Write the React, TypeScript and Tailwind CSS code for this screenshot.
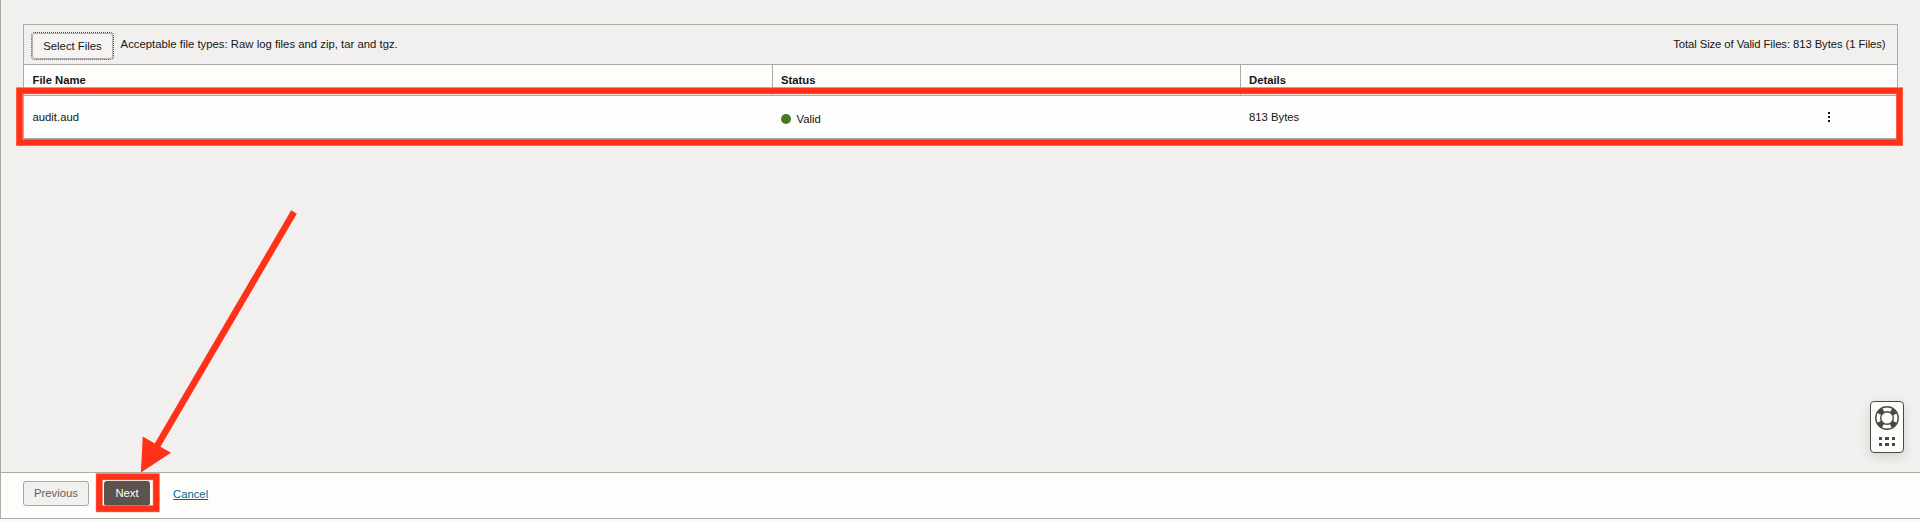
import React from "react";

function LifeRing() {
  return (
    <svg width="24" height="24" viewBox="0 0 24 24" fill="none" stroke="#4b4844">
      <circle cx="12" cy="12" r="8.8" stroke="#fdfdfc" strokeWidth="5" />
      <circle cx="12" cy="12" r="8.8" strokeWidth="5" strokeDasharray="5.6 8.22" strokeDashoffset="-4.11" />
      <circle cx="12" cy="12" r="11.2" strokeWidth="1.4" />
      <circle cx="12" cy="12" r="6.3" strokeWidth="1.4" />
    </svg>
  );
}

function HelpWidget() {
  return (
    <div className="absolute left-[1870px] top-[401px] flex h-[52px] w-[34px] flex-col items-center rounded-[4px] border border-[#4b4844] bg-[#fdfdfc] pt-[4px] shadow-[0_4px_12px_rgba(0,0,0,0.12)]">
      <LifeRing />
      <div className="mt-[7px] grid grid-cols-[3px_4px_3px] gap-x-[3px] gap-y-[3px]">
        {[0, 1, 2, 3, 4, 5].map((i) => (
          <span key={i} className="h-[3px] bg-[#4b4844]" />
        ))}
      </div>
    </div>
  );
}

function Annotations() {
  return (
    <svg className="pointer-events-none absolute left-0 top-0" width="1920" height="522" viewBox="0 0 1920 522" fill="none">
      <g stroke="#ff8a73" strokeWidth="7">
        <rect x="19.5" y="90.75" width="1880" height="51.75" />
        <rect x="99.25" y="476.75" width="57" height="32" />
      </g>
      <g stroke="#ff3119" strokeWidth="6">
        <rect x="19.5" y="90.75" width="1880" height="51.75" />
        <rect x="99.25" y="476.75" width="57" height="32" />
      </g>
      <path d="M294 212L156.2 447.5" stroke="#ff3119" strokeWidth="6.5" />
      <path d="M140.9 472.5L142.7 436.4L171 452.7Z" fill="#ff3119" />
    </svg>
  );
}

export default function App() {
  return (
    <div className="relative flex h-[522px] w-[1920px] flex-col overflow-hidden bg-[#fbfaf9] font-['Liberation_Sans',Arial,sans-serif] text-[11.3px] leading-[14px] text-[#161513]">
      <main className="h-[472px] border-l border-[#aaa6a1] bg-[#f1f0ee] pl-[22px] pt-[24px]">
        <section className="w-[1875px] border border-[#aeaaa5] bg-[#fdfdfc]">
          <div className="flex h-[39px] items-start justify-between bg-[#f1f0ee] pl-[7px] pr-[11.5px] pt-[7px]">
            <div className="flex">
              <button className="h-[28px] w-[83px] rounded-[4px] border border-dotted border-[#4a4845] bg-[#f5f4f2]">
                <span className="flex h-[26px] w-[81px] items-center justify-center rounded-[3px] border border-[#b5b1ac]">Select Files</span>
              </button>
              <span className="ml-[6.6px] mt-[5px] tracking-[0.015px]">Acceptable file types: Raw log files and zip, tar and tgz.</span>
            </div>
            <span className="mt-[5px] tracking-[-0.09px]">Total Size of Valid Files: 813 Bytes (1 Files)</span>
          </div>
          <div className="grid h-[32px] grid-cols-[748px_468px_657px] border-y border-[#aeaaa5] font-bold">
            <div className="pl-[8.5px] pt-[8px]">File Name</div>
            <div className="border-l border-[#aeaaa5] pl-[8px] pt-[8px]">Status</div>
            <div className="border-l border-[#aeaaa5] pl-[8px] pt-[8px]">Details</div>
          </div>
          <div className="grid h-[42px] grid-cols-[748px_468px_657px]">
            <div className="pl-[8.5px] pt-[14px]">audit.aud</div>
            <div className="flex pl-[9px] pt-[16px]">
              <span className="mr-[5.5px] mt-[2px] size-[10px] rounded-full bg-[#467a25]" />
              Valid
            </div>
            <div className="flex justify-between pl-[9px] pt-[14px]">
              813 Bytes
              <div className="mr-[67px] mt-[2px] flex flex-col gap-[2px]">
                <span className="size-[2px] bg-[#161513]" />
                <span className="size-[2px] bg-[#161513]" />
                <span className="size-[2px] bg-[#161513]" />
              </div>
            </div>
          </div>
        </section>
      </main>
      <footer className="flex h-[47px] border-y border-l border-[#aeaaa5] bg-[#fdfdfc] pl-[22px] pt-[8px]">
        <button className="h-[25px] w-[66px] rounded-[3px] border border-[#aaa6a1] bg-[#f1f0ee] pb-[2px] text-[#65605b]">Previous</button>
        <button className="ml-[15px] h-[25px] w-[46px] rounded-[3px] bg-[#5b544e] pb-[2px] text-white">Next</button>
        <a className="ml-[23px] mt-[6px] text-[#00688c] underline underline-offset-1">Cancel</a>
      </footer>
      <HelpWidget />
      <Annotations />
    </div>
  );
}
